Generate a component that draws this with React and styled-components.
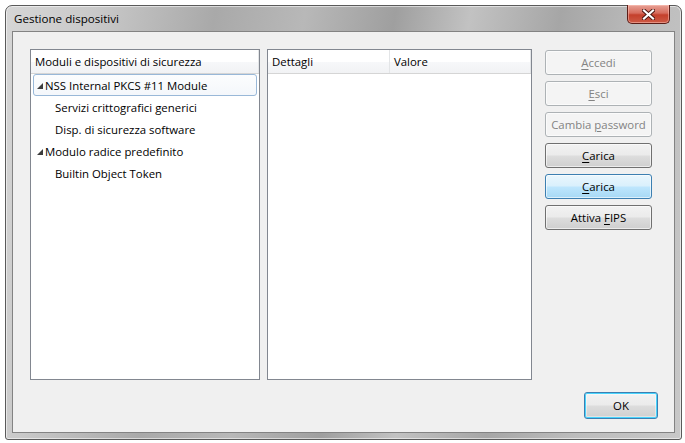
import React from "react";
import styled, { createGlobalStyle } from "styled-components";

const GlobalStyle = createGlobalStyle`
  html, body {
    margin: 0;
    padding: 0;
    background: #ffffff;
  }
  body {
    font-family: "Open Sans", "Noto Sans", "Liberation Sans", sans-serif;
    font-size: 11.4px;
    color: #000;
  }
`;

const treeItems = [
  { label: "NSS Internal PKCS #11 Module", level: 0, selected: true },
  { label: "Servizi crittografici generici", level: 1 },
  { label: "Disp. di sicurezza software", level: 1 },
  { label: "Modulo radice predefinito", level: 0 },
  { label: "Builtin Object Token", level: 1 },
];

const buttons = [
  { pre: "", key: "A", post: "ccedi", variant: "disabled" },
  { pre: "", key: "E", post: "sci", variant: "disabled" },
  { pre: "Cambia ", key: "p", post: "assword", variant: "disabled" },
  { pre: "", key: "C", post: "arica", variant: "normal" },
  { pre: "", key: "C", post: "arica", variant: "hover" },
  { pre: "Attiva ", key: "F", post: "IPS", variant: "normal" },
];

function Expander() {
  return (
    <ExpanderIcon width="6" height="6" viewBox="0 0 6 6">
      <path d="M6 0 L6 6 L0 6 Z" fill="#3c3c3c" />
    </ExpanderIcon>
  );
}

export default function App() {
  return (
    <>
      <GlobalStyle />
      <Page>
        <Window>
          <TitleBar>
            <Title>Gestione dispositivi</Title>
            <CloseButton>
              <svg width="13" height="11" viewBox="0 0 13 11">
                <path
                  d="M2 1.5 L11 9.5 M11 1.5 L2 9.5"
                  stroke="#4a1510"
                  strokeWidth="4"
                  strokeLinecap="square"
                />
                <path
                  d="M2 1.5 L11 9.5 M11 1.5 L2 9.5"
                  stroke="#ffffff"
                  strokeWidth="2.2"
                  strokeLinecap="square"
                />
              </svg>
            </CloseButton>
          </TitleBar>
          <Client>
            <MainRow>
              <TreePanel>
                <Header>
                  <HeaderCell $grow>Moduli e dispositivi di sicurezza</HeaderCell>
                </Header>
                <TreeList>
                  {treeItems.map((item) => (
                    <TreeRow key={item.label} $selected={item.selected} $level={item.level}>
                      {item.level === 0 && <Expander />}
                      <span>{item.label}</span>
                    </TreeRow>
                  ))}
                </TreeList>
              </TreePanel>
              <DetailsPanel>
                <Header>
                  <HeaderCell $width={122}>Dettagli</HeaderCell>
                  <HeaderCell $grow>Valore</HeaderCell>
                </Header>
              </DetailsPanel>
              <ButtonColumn>
                {buttons.map((b, i) => (
                  <Button key={i} $variant={b.variant}>
                    <span>
                      {b.pre}
                      <u>{b.key}</u>
                      {b.post}
                    </span>
                  </Button>
                ))}
              </ButtonColumn>
            </MainRow>
            <BottomRow>
              <OkButton>OK</OkButton>
            </BottomRow>
          </Client>
        </Window>
      </Page>
    </>
  );
}

const Page = styled.div`
  width: 685px;
  height: 443px;
  padding: 5px 0 0 5px;
  box-sizing: border-box;
`;

const Window = styled.div`
  width: 677px;
  height: 435px;
  box-sizing: border-box;
  border: 1px solid #5a5a5a;
  border-radius: 7px 7px 3px 3px;
  background: linear-gradient(
    100deg,
    #d6d6d6 0%,
    #c9c9c9 12%,
    #a9a9a9 28%,
    #b8b8b8 40%,
    #9f9f9f 52%,
    #c2c2c2 62%,
    #a6a6a6 74%,
    #bdbdbd 86%,
    #c8c8c8 100%
  );
  box-shadow: inset 0 0 0 1px rgba(255, 255, 255, 0.55);
  display: flex;
  flex-direction: column;
  padding: 0 6px 6px 6px;
`;

const TitleBar = styled.div`
  height: 25px;
  display: flex;
  align-items: flex-start;
  justify-content: space-between;
`;

const Title = styled.div`
  padding: 5px 0 0 2px;
  font-size: 11.6px;
  color: #000;
`;

const CloseButton = styled.div`
  width: 43px;
  height: 19px;
  margin-right: 5px;
  margin-top: -1px;
  box-sizing: border-box;
  border: 1px solid #5b1d17;
  border-top: none;
  border-radius: 0 0 5px 5px;
  background: linear-gradient(180deg, #e8a296 0%, #d66c5d 45%, #c4402c 55%, #cd5a45 100%);
  box-shadow: inset 0 0 0 1px rgba(255, 200, 190, 0.5);
  display: flex;
  align-items: center;
  justify-content: center;
`;

const Client = styled.div`
  flex: 1;
  box-sizing: border-box;
  border: 1px solid #838383;
  background: #f0f0f0;
  padding: 17px 16px 13px 17px;
  display: flex;
  flex-direction: column;
`;

const MainRow = styled.div`
  display: flex;
  align-items: flex-start;
`;

const PanelBase = styled.div`
  height: 331px;
  box-sizing: border-box;
  border: 1px solid #828790;
  background: #ffffff;
  display: flex;
  flex-direction: column;
`;

const TreePanel = styled(PanelBase)`
  width: 230px;
`;

const DetailsPanel = styled(PanelBase)`
  width: 265px;
  margin-left: 7px;
`;

const Header = styled.div`
  height: 23px;
  display: flex;
  background: linear-gradient(180deg, #ffffff 0%, #ffffff 50%, #f7f8fa 51%, #f1f2f4 100%);
  border-bottom: 1px solid #d5d5d5;
`;

const HeaderCell = styled.div`
  ${({ $grow }) => ($grow ? "flex: 1;" : "")}
  ${({ $width }) => ($width ? `width: ${$width}px;` : "")}
  box-sizing: border-box;
  padding: 4px 0 0 4px;
  border-right: 1px solid #e3e5e7;
  color: #000;
  white-space: nowrap;
`;

const TreeList = styled.div`
  display: flex;
  flex-direction: column;
  padding: 0 2px;
`;

const TreeRow = styled.div`
  height: 22px;
  box-sizing: border-box;
  display: flex;
  align-items: center;
  padding-left: ${({ $level }) => ($level === 0 ? 3 : 21)}px;
  border: 1px solid ${({ $selected }) => ($selected ? "#99b8d8" : "transparent")};
  border-radius: 3px;
  background: ${({ $selected }) =>
    $selected ? "linear-gradient(180deg, #fcfdfe 0%, #f4f7fb 100%)" : "transparent"};
  white-space: nowrap;
`;

const ExpanderIcon = styled.svg`
  margin-right: 2px;
  margin-top: 2px;
  flex-shrink: 0;
`;

const ButtonColumn = styled.div`
  margin-left: 13px;
  display: flex;
  flex-direction: column;
  gap: 6px;
  padding-top: 1px;
`;

const buttonStyles = {
  disabled: `
    border-color: #adb2b5;
    background: #f4f4f4;
    color: #838383;
  `,
  normal: `
    border-color: #707070;
    background: linear-gradient(180deg, #f2f2f2 0%, #ebebeb 48%, #dddddd 52%, #cfcfcf 100%);
    color: #000;
  `,
  hover: `
    border-color: #3c7fb1;
    background: linear-gradient(180deg, #eaf6fd 0%, #d9f0fc 48%, #bee6fd 52%, #a7d9f5 100%);
    color: #000;
  `,
};

const Button = styled.div`
  width: 107px;
  height: 25px;
  box-sizing: border-box;
  border: 1px solid;
  border-radius: 3px;
  display: flex;
  align-items: center;
  justify-content: center;
  white-space: pre;
  box-shadow: inset 0 0 0 1px rgba(255, 255, 255, 0.6);
  ${({ $variant }) => buttonStyles[$variant]}

  u {
    text-underline-offset: 2px;
  }
`;

const BottomRow = styled.div`
  margin-top: auto;
  display: flex;
  justify-content: flex-end;
`;

const OkButton = styled.div`
  width: 74px;
  height: 27px;
  box-sizing: border-box;
  border: 1px solid #3c7fb1;
  border-radius: 3px;
  display: flex;
  align-items: center;
  justify-content: center;
  background: linear-gradient(180deg, #f2f2f2 0%, #ebebeb 48%, #dddddd 52%, #cfcfcf 100%);
  box-shadow: inset 0 0 0 1px #48d4fd, inset 0 0 0 2px rgba(255, 255, 255, 0.4);
  color: #000;
`;
